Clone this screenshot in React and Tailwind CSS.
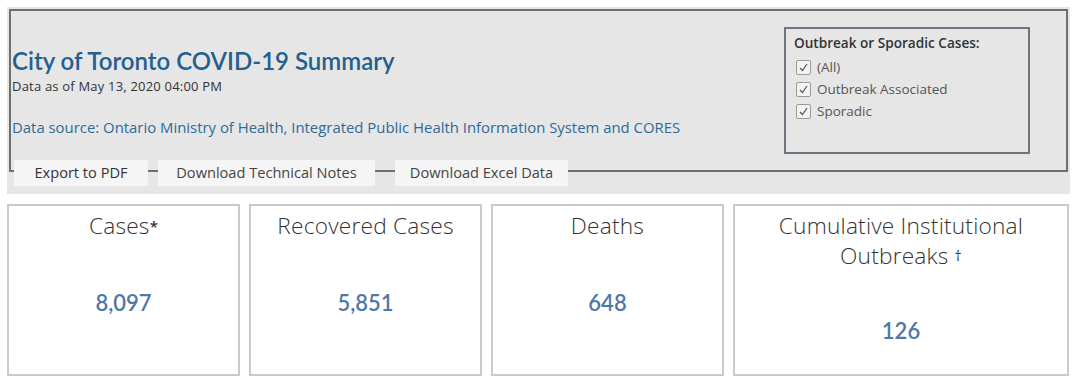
import React from 'react';

const body = { fontFamily: '"Open Sans", "Noto Sans", sans-serif' };
const lato = { fontFamily: 'Lato, "Open Sans", sans-serif' };

function Check({ label }) {
  return (
    <div className="flex items-center gap-[6px] h-[22px]">
      <span className="w-[15px] h-[15px] border border-[#9a9a9a] rounded-[2px] bg-[#f3f3f3] flex items-center justify-center">
        <svg width="11" height="11" viewBox="0 0 11 11">
          <path d="M2 6 L4.5 8.5 L9 2" fill="none" stroke="#555" strokeWidth="1.2" />
        </svg>
      </span>
      <span className="text-[13.5px] text-[#555]">{label}</span>
    </div>
  );
}

function Card({ title, value, wide, valueTop }) {
  return (
    <div className={`${wide ? 'w-[336px]' : 'w-[233px]'} h-[172px] border-2 border-[#c8cbcb] bg-white flex flex-col items-center`}>
      <div className="mt-[5px] text-[22.7px] leading-[30px] font-light tracking-[0.2px] text-[#333] text-center px-2">{title}</div>
      <div className={`${valueTop} text-[22px] leading-[26px] font-semibold text-[#4f78a8]`} style={lato}>{value}</div>
    </div>
  );
}

export default function App() {
  return (
    <div className="w-[1080px] h-[384px] bg-white pt-[7px]" style={body}>
      {/* header panel */}
      <div className="ml-[7px] w-[1063px] h-[187px] bg-[#e6e6e6] px-[2px] pt-[2px]">
        <div className="h-[163px] border-2 border-[#6f6f6f] flex justify-between">
          <div className="pl-[1px]">
            <h1 className="mt-[36px] text-[24px] leading-[28px] font-semibold text-[#23608e]" style={lato}>City of Toronto COVID-19 Summary</h1>
            <p className="mt-[3px] text-[13px] leading-[16px] tracking-[0.2px] text-[#333]">Data as of May 13, 2020 04:00 PM</p>
            <p className="mt-[24px] text-[14.9px] leading-[18px] text-[#2f6a98]">
              Data source: Ontario Ministry of Health, Integrated Public Health Information System and CORES
            </p>
          </div>
          <div className="mt-[16px] mr-[36px] w-[246px] h-[127px] border-2 border-[#6d7680] px-[8px] pt-[5px]">
            <div className="text-[13.6px] leading-[18px] font-semibold text-[#333] mb-[4px]">Outbreak or Sporadic Cases:</div>
            <div className="pl-[2px]">
              <Check label="(All)" />
              <Check label="Outbreak Associated" />
              <Check label="Sporadic" />
            </div>
          </div>
        </div>
        <div className="-mt-[12px] ml-[5px] flex gap-[10px] text-[14.6px] text-[#333]">
          <button className="h-[26px] w-[134px] bg-[#f5f5f5]">Export to PDF</button>
          <button className="h-[26px] w-[217px] bg-[#f5f5f5] text-[#444]">Download Technical Notes</button>
          <button className="ml-[10px] h-[26px] w-[173px] bg-[#f5f5f5] text-[#444]">Download Excel Data</button>
        </div>
      </div>

      {/* summary cards */}
      <div className="mt-[10px] ml-[7px] flex gap-[9px]">
        <Card title={<>Cases<span className="text-[15px] font-semibold align-top">*</span></>} value="8,097" valueTop="mt-[49px]" />
        <Card title="Recovered Cases" value="5,851" valueTop="mt-[49px]" />
        <Card title="Deaths" value="648" valueTop="mt-[49px]" />
        <Card
          wide
          title={<>Cumulative Institutional<br />Outbreaks <span className="text-[14px] font-normal align-top">†</span></>}
          value="126"
          valueTop="mt-[47px]"
        />
      </div>
    </div>
  );
}
